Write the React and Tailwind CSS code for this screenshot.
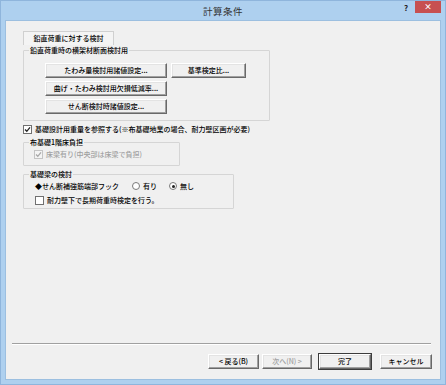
import React from "react";

const font = { fontFamily: '"Noto Sans CJK JP", "Noto Sans", sans-serif' };

function Btn({ children, className = "", disabled = false, def = false }) {
  return (
    <div
      className={
        "flex items-center justify-center h-[15px] text-[7px] leading-none bg-[#f0f0f0] border border-t-[#ffffff] border-l-[#ffffff] border-r-[#696969] border-b-[#696969] shadow-[inset_-1px_-1px_0_#a0a0a0,inset_1px_1px_0_#e3e3e3] " +
        (def ? "outline outline-1 outline-[#3c3c3c] " : "") +
        (disabled ? "text-[#a0a0a0] " : "text-black ") +
        className
      }
    >
      {children}
    </div>
  );
}

function Check({ checked = false, disabled = false }) {
  return (
    <div
      className={
        "w-[9px] h-[9px] border flex items-center justify-center shrink-0 " +
        (disabled ? "border-[#c4c4c4] bg-[#f4f4f4]" : "border-[#707070] bg-white")
      }
    >
      {checked && (
        <svg width="7" height="7" viewBox="0 0 7 7">
          <path
            d="M1 3.5 L2.8 5.3 L6 1.3"
            fill="none"
            stroke={disabled ? "#a8a8a8" : "#222"}
            strokeWidth="1.3"
          />
        </svg>
      )}
    </div>
  );
}

function Radio({ checked = false }) {
  return (
    <div className="w-[8px] h-[8px] rounded-full border border-[#7a7a7a] bg-white flex items-center justify-center shrink-0">
      {checked && <div className="w-[3px] h-[3px] rounded-full bg-[#222]" />}
    </div>
  );
}

function Group({ title, className = "", children }) {
  return (
    <div className={"relative border border-[#d5d5d5] rounded-[1px] " + className}>
      <span className="absolute -top-[6px] left-[5px] px-[1px] bg-[#f0f0f0] text-[7px] leading-[10px] text-black whitespace-nowrap">
        {title}
      </span>
      {children}
    </div>
  );
}

export default function App() {
  return (
    <div
      className="w-[446px] h-[385px] bg-[#aed0ef] flex flex-col border border-[#8fb5dc] font-medium"
      style={font}
    >
      {/* title bar */}
      <div className="relative h-[19px] shrink-0 flex items-center justify-center">
        <span className="text-[9.5px] text-[#333] tracking-[0.5px] mt-[1px] font-normal">計算条件</span>
        <span className="absolute left-[403px] top-[3px] text-[8px] font-bold text-[#222] leading-none">?</span>
        <div className="absolute left-[414px] top-0 w-[26px] h-[12px] bg-[#c75050] flex items-center justify-center">
          <span className="text-white text-[8px] font-bold leading-none">×</span>
        </div>
      </div>

      {/* client */}
      <div className="mx-[4px] mb-[4px] flex-1 bg-[#f0f0f0] border border-[#9cbfe0] flex flex-col text-black">
        <div className="pl-[17px] pt-[10px] flex flex-col">
          {/* tab */}
          <div className="w-[91px] h-[14px] border border-[#d0d0d0] border-b-0 bg-[#f4f4f4] flex items-center justify-center text-[7px] leading-none">
            鉛直荷重に対する検討
          </div>

          {/* group 1 */}
          <Group title="鉛直荷重時の横架材断面検討用" className="mt-[5px] w-[247px] h-[71px]">
            <div className="pl-[21px] pt-[12px] flex gap-[4px]">
              <div className="flex flex-col gap-[3px] w-[122px]">
                <Btn>たわみ量検討用諸値設定...</Btn>
                <Btn>曲げ・たわみ検討用欠損低減率...</Btn>
                <Btn>せん断検討時諸値設定...</Btn>
              </div>
              <Btn className="w-[75px]">基準検定比...</Btn>
            </div>
          </Group>

          {/* checkbox */}
          <div className="mt-[3px] h-[10px] flex items-center gap-[3px] text-[7px] leading-none">
            <Check checked />
            <span>基礎設計用重量を参照する(※布基礎地業の場合、耐力壁区画が必要)</span>
          </div>

          {/* group 2 */}
          <Group title="布基礎1階床負担" className="mt-[8px] w-[157px] h-[24px]">
            <div className="pl-[10px] pt-[7px] flex items-center gap-[3px] text-[7px] leading-none text-[#a0a0a0]">
              <Check checked disabled />
              <span>床梁有り(中央部は床梁で負担)</span>
            </div>
          </Group>

          {/* group 3 */}
          <Group title="基礎梁の検討" className="mt-[8px] w-[211px] h-[35px]">
            <div className="pl-[11px] pt-[6px] flex flex-col gap-[4px] text-[7px] leading-none">
              <div className="flex items-center h-[10px]">
                <span className="w-[97px]">◆せん断補強筋端部フック</span>
                <div className="flex items-center gap-[3px] w-[37px]">
                  <Radio />
                  <span>有り</span>
                </div>
                <div className="flex items-center gap-[3px]">
                  <Radio checked />
                  <span>無し</span>
                </div>
              </div>
              <div className="flex items-center gap-[3px] h-[10px]">
                <Check />
                <span>耐力壁下で長期荷重時検定を行う。</span>
              </div>
            </div>
          </Group>
        </div>

        <div className="flex-1" />

        {/* separator */}
        <div className="ml-[6px] mr-[9px] h-[2px] border-t border-[#a0a0a0] border-b border-b-white" />

        {/* bottom buttons */}
        <div className="mt-[9px] mb-[10px] flex justify-end pr-[8px]">
          <Btn className="w-[51px]">&lt; 戻る(B)</Btn>
          <Btn className="w-[50px] ml-[3px]" disabled>次へ(N) &gt;</Btn>
          <Btn className="w-[52px] ml-[7px]" def>完了</Btn>
          <Btn className="w-[52px] ml-[9px]">キャンセル</Btn>
        </div>
      </div>
    </div>
  );
}
